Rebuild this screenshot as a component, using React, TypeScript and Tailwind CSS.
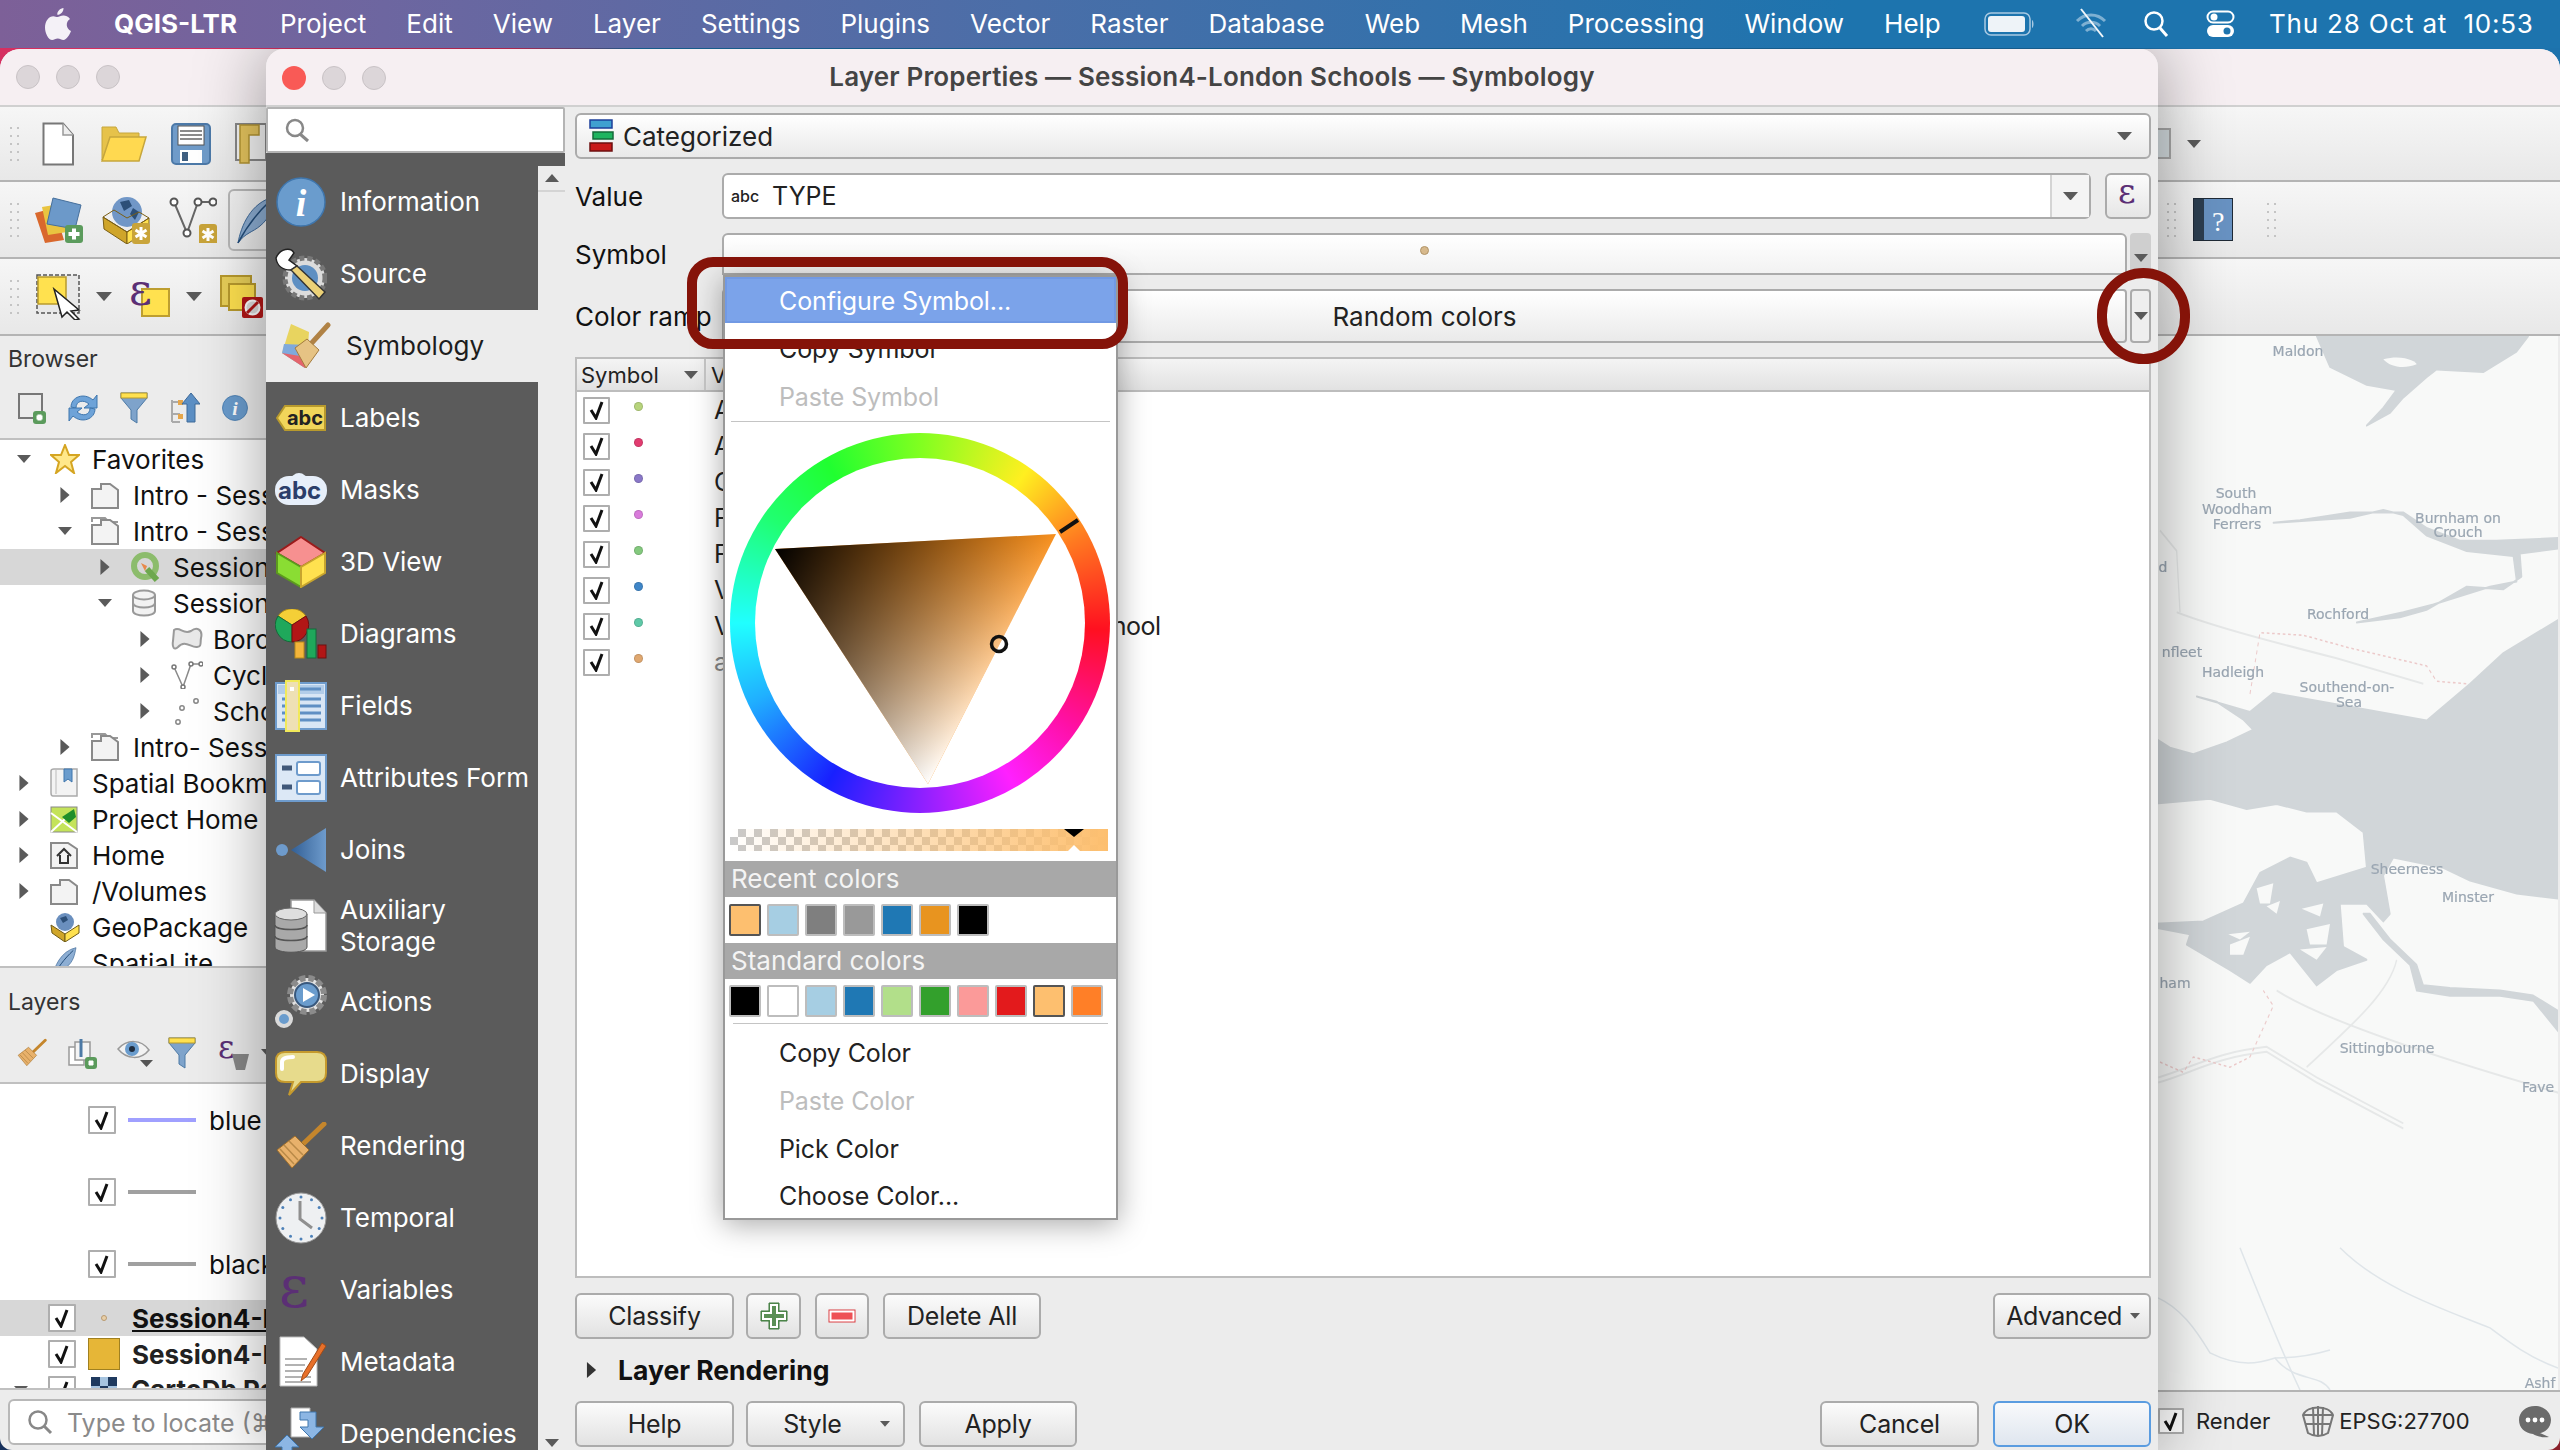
import React from "react";

const Arrow = ({ dir = "down", size = 14, color = "#5a5a5a" }: { dir?: "down" | "right" | "up"; size?: number; color?: string }) => {
  const d = dir === "down" ? "M0 0H14L7 8Z" : dir === "up" ? "M0 8H14L7 0Z" : "M2 -3L10 4L2 11Z";
  return (
    <svg width={size} height={dir === "right" ? 16 : (size * 8) / 14} viewBox={dir === "right" ? "0 -3 12 14" : "0 0 14 8"} className="shrink-0">
      <path d={d} fill={color} />
    </svg>
  );
};

const Grip = () => (
  <svg width="10" height="36" viewBox="0 0 10 36" className="shrink-0">
    {[1, 9, 17, 25, 33].map((y) => (
      <g key={y} fill="#c4c4c4">
        <rect x="0" y={y} width="2" height="2" />
        <rect x="7" y={y} width="2" height="2" />
      </g>
    ))}
  </svg>
);

const Check = ({ size = 28 }: { size?: number }) => (
  <span className="flex shrink-0 items-center justify-center rounded-[1px] border-2 border-[#aeaeae] bg-white" style={{ width: size, height: size }}>
    <svg width="18" height="20" viewBox="0 0 18 20">
      <path d="M3 10L8 18L14 2" fill="none" stroke="#111" strokeWidth="3" />
    </svg>
  </span>
);

const Eps = ({ size = 40, x = 0, y = 0 }: { size?: number; x?: number; y?: number }) => (
  <text x={x} y={y} fontSize={size} fontFamily="'DejaVu Serif', serif" fill="#5b2f75">
    ε
  </text>
);

const PlusBadge = ({ x, y, s = 18 }: { x: number; y: number; s?: number }) => (
  <g transform={`translate(${x} ${y})`}>
    <rect width={s} height={s} rx="3" fill="#5b9b5c" />
    <path d={`M${s / 2} 3.5V${s - 3.5}M3.5 ${s / 2}H${s - 3.5}`} stroke="#fff" strokeWidth="4" />
  </g>
);

const StarBadge = ({ x, y }: { x: number; y: number }) => (
  <g transform={`translate(${x} ${y})`}>
    <rect width="18" height="21" rx="3" fill="#c9a43a" />
    <path d="M9 4V17M3.5 7L14.5 14M14.5 7L3.5 14" stroke="#fff" strokeWidth="3" />
  </g>
);

const Svg = ({ w, h, children }: { w: number; h: number; children: React.ReactNode }) => (
  <svg width={w} height={h} viewBox={`0 0 ${w} ${h}`} className="shrink-0">
    {children}
  </svg>
);

// toolbar icons
const NewDoc = () => (
  <Svg w={32} h={44}>
    <path d="M1.5 1.5H21L31 13V42.5H1.5Z" fill="#fff" stroke="#777" strokeWidth="2" />
    <path d="M21 1.5V13H31" fill="#eee" stroke="#999" strokeWidth="1.5" />
  </Svg>
);
const OpenFolder = () => (
  <Svg w={46} h={36}>
    <path d="M1 34V1H15L18 7H38V13H10Z" fill="#e6c24a" stroke="#c6a63d" />
    <path d="M1 35L9 11H45L38 35Z" fill="#ffd950" stroke="#c6a63d" strokeWidth="1.5" />
  </Svg>
);
const SaveIcon = () => (
  <Svg w={40} h={42}>
    <rect x="1" y="1" width="38" height="40" rx="4" fill="#6f9bc9" stroke="#4c79a8" strokeWidth="2" />
    <rect x="7" y="3" width="26" height="19" fill="#fff" stroke="#555" />
    <path d="M9 8H31M9 12H31M9 16H31" stroke="#666" strokeWidth="1.5" />
    <rect x="9" y="27" width="22" height="13" fill="#fff" />
    <rect x="11" y="29" width="6" height="9" fill="#3f5f80" />
  </Svg>
);
const LayoutIcon = () => (
  <Svg w={34} h={42}>
    <rect x="1" y="1" width="30" height="36" fill="#f5f5f5" stroke="#888" strokeWidth="2" />
    <path d="M5 2H24V12H14V40H5Z" fill="#e6c55e" stroke="#b39433" strokeWidth="1.5" />
  </Svg>
);
const LayersIcon = () => (
  <Svg w={50} h={46}>
    <path d="M1 16L20 11L30 43L11 46Z" fill="#d9682d" />
    <path d="M8 10L26 7L33 35L14 38Z" fill="#e9c440" />
    <path d="M19 1L47 8L41 32L13 27Z" fill="#6c99c9" stroke="#456f9c" />
    <PlusBadge x={31} y={28} />
  </Svg>
);
const GlobeCube = () => (
  <Svg w={48} h={48}>
    <circle cx="25" cy="16" r="15" fill="#7197c7" />
    <path d="M18 6L27 4L30 10L22 15ZM31 12L37 16L33 24L28 18Z" fill="#2c4f78" />
    <path d="M1 21L25 36V48L2 33Z" fill="#cfa52a" stroke="#7a5f16" />
    <path d="M25 36L47 22V34L25 48Z" fill="#ffe14f" stroke="#7a5f16" />
    <path d="M1 21L12 14L25 22L37 16L47 22L25 36Z" fill="none" stroke="#7a5f16" />
    <StarBadge x={30} y={27} />
  </Svg>
);
const DigitizeV = () => (
  <Svg w={48} h={46}>
    <path d="M5 5L18 36L29 5H45" fill="none" stroke="#666" strokeWidth="2" />
    <g fill="#fff" stroke="#555" strokeWidth="2">
      <circle cx="5" cy="5" r="3.5" />
      <circle cx="18" cy="36" r="3.5" />
      <circle cx="29" cy="5" r="3.5" />
      <circle cx="44" cy="5" r="3.5" />
    </g>
    <StarBadge x={30} y={27} />
  </Svg>
);
const Feather = ({ w = 40, h = 48 }: { w?: number; h?: number }) => (
  <svg width={w} height={h} viewBox="0 0 40 48" className="shrink-0">
    <path d="M2 47C5 30 15 6 38 1C36 12 34 22 24 30C17 36 9 37 2 47Z" fill="#8daed3" stroke="#3f6a99" />
    <path d="M2 47C10 32 20 18 34 5" fill="none" stroke="#234d7a" strokeWidth="1.5" />
  </svg>
);
const SelectIcon = () => (
  <Svg w={46} h={46}>
    <rect x="1" y="1" width="42" height="38" fill="#e8e8e8" stroke="#555" strokeWidth="1.5" strokeDasharray="4 2" />
    <rect x="2" y="3" width="28" height="27" fill="#ffe14f" stroke="#b89a2d" strokeWidth="1.5" />
    <path d="M18 15L43 36L35 37L43 45L39 46L31 38L26 43Z" fill="#fff" stroke="#222" strokeWidth="1.5" />
  </Svg>
);
const EpsYellow = () => (
  <Svg w={40} h={42}>
    <rect x="12" y="13" width="27" height="27" fill="#ffe14f" stroke="#bd9e30" strokeWidth="2" />
    <Eps size={44} x={-1} y={29} />
  </Svg>
);
const Deselect = () => (
  <Svg w={46} h={44}>
    <rect x="1" y="1" width="30" height="30" fill="#e8cf59" stroke="#b89a2d" strokeWidth="2" />
    <rect x="9" y="9" width="26" height="26" fill="#ffe14f" stroke="#b89a2d" strokeWidth="2" />
    <rect x="22" y="22" width="21" height="21" rx="2" fill="#b21616" />
    <circle cx="32.5" cy="32.5" r="7" fill="#ddd" stroke="#fff" strokeWidth="2" />
    <path d="M27 38L38 27" stroke="#b21616" strokeWidth="3" />
  </Svg>
);
const HelpBook = () => (
  <Svg w={40} h={43}>
    <rect x="0.5" y="0.5" width="39" height="42" fill="#6892c2" stroke="#1f2a36" />
    <rect x="1" y="1" width="10" height="41" fill="#2c3e50" />
    <text x="19" y="33" fontSize="28" fill="#fff" fontFamily="'Liberation Serif', serif">?</text>
  </Svg>
);

// browser tool icons
const AddSmall = () => (
  <Svg w={28} h={32}>
    <rect x="1" y="2" width="23" height="24" fill="none" stroke="#777" strokeWidth="2" />
    <PlusBadge x={15} y={19} s={13} />
  </Svg>
);
const RefreshIcon = () => (
  <Svg w={30} h={32}>
    <path d="M3 15C3 5 16 0 25 8L29 3V16H16L21 12C15 7 8 9 8 16Z" fill="#6ea3d8" stroke="#3f76ad" />
    <path d="M27 17C27 27 14 32 5 24L1 29V16H14L9 20C15 25 22 23 22 16Z" fill="#6ea3d8" stroke="#3f76ad" />
  </Svg>
);
const FilterIcon = ({ w = 28, h = 32 }: { w?: number; h?: number }) => (
  <svg width={w} height={h} viewBox="0 0 28 32" className="shrink-0">
    <path d="M1 1H27V6L17 18V31L11 27V18L1 6Z" fill="#7ea3cb" stroke="#4d7aa6" />
    <rect x="1" y="1" width="26" height="5" fill="#ffe14f" stroke="#b89a2d" />
  </svg>
);
const CollapseIcon = () => (
  <Svg w={30} h={32}>
    <path d="M2 8V30M2 10H10M2 22H10M2 30H10" stroke="#aaa" strokeWidth="2" fill="none" />
    <rect x="8" y="8" width="5" height="5" fill="#e6a64a" />
    <rect x="8" y="22" width="5" height="5" fill="#e6a64a" />
    <path d="M21 1L30 12H25V30H17V12H12Z" fill="#5c8fc4" stroke="#3f6a99" />
  </Svg>
);
const InfoIcon = ({ size = 26 }: { size?: number }) => (
  <svg width={size} height={size} viewBox="0 0 50 50" className="shrink-0">
    <circle cx="25" cy="25" r="24" fill="#6a9ccd" stroke="#3f76ad" strokeWidth="1.5" />
    <text x="25" y="39" textAnchor="middle" fontSize="38" fontStyle="italic" fontWeight="700" fill="#fff" fontFamily="'Liberation Serif', serif">i</text>
  </svg>
);

// dialog list icons
const SourceIcon = () => (
  <Svg w={52} h={56}>
    <circle cx="30" cy="32" r="20" fill="#dcdcdc" stroke="#777" strokeWidth="5" strokeDasharray="5 3" />
    <circle cx="30" cy="32" r="13" fill="#5e8fc2" />
    <path d="M1 12C5 2 16 1 19 7L14 14L22 20L16 24C8 24 2 20 1 12Z" fill="#fff" stroke="#222" strokeWidth="1.5" />
    <path d="M22 20L50 46L44 53L16 24Z" fill="#ecd177" stroke="#333" strokeWidth="1.5" />
  </Svg>
);
const BrushPaper = () => (
  <Svg w={52} h={48}>
    <path d="M1 31L10 2L28 10L26 37L24 46Z" fill="#e8d45f" />
    <path d="M3 22L26 23L26 37L24 46L1 31Z" fill="#7fa9dc" />
    <path d="M1 31L25 35L24 46Z" fill="#e4646c" />
    <path d="M28 24L47 3" stroke="#b08245" strokeWidth="5" strokeLinecap="round" />
    <path d="M14 26L26 17L38 28L25 46Z" fill="#e6c384" stroke="#a47b3d" />
  </Svg>
);
const LabelsIcon = () => (
  <Svg w={50} h={26}>
    <path d="M1 13L9 1H49V25H9Z" fill="#f1d55a" stroke="#b89a2d" strokeWidth="2" />
    <text x="11" y="20" fontSize="20" fontWeight="700" fill="#222" fontFamily="Inter, sans-serif">abc</text>
  </Svg>
);
const MasksIcon = () => (
  <Svg w={54} h={36}>
    <rect x="1" y="4" width="52" height="29" rx="14" fill="#e7effa" />
    <circle cx="25" cy="9" r="8" fill="#e7effa" />
    <text x="4" y="27" fontSize="24" fontWeight="700" fill="#2c3e6a" fontFamily="Inter, sans-serif">abc</text>
  </Svg>
);
const CubeIcon = () => (
  <Svg w={52} h={52}>
    <path d="M26 1L50 17L26 31L2 17Z" fill="#f79090" stroke="#9b1b1b" strokeWidth="2" />
    <path d="M2 17L26 31V51L2 37Z" fill="#8add33" stroke="#5c9a1e" strokeWidth="2" />
    <path d="M50 17L26 31V51L50 37Z" fill="#ffe14f" stroke="#c7a42e" strokeWidth="2" />
  </Svg>
);
const DiagramsIcon = () => (
  <Svg w={52} h={50}>
    <path d="M17 16L3 7A17 17 0 0 1 31 7Z" fill="#f4cf37" stroke="#a8851b" />
    <path d="M17 16L3 7A17 17 0 0 0 17 33Z" fill="#1fa85b" stroke="#136b3a" />
    <path d="M17 16L31 7A17 17 0 0 1 17 33Z" fill="#b21616" stroke="#6e1010" />
    <rect x="20" y="33" width="9" height="16" fill="#f4b53a" stroke="#b88a1b" />
    <rect x="32" y="20" width="9" height="29" fill="#1fa85b" stroke="#136b3a" />
    <rect x="43" y="36" width="8" height="13" fill="#b21616" stroke="#6e1010" />
  </Svg>
);
const FieldsIcon = () => (
  <Svg w={52} h={52}>
    <rect x="1" y="3" width="50" height="46" fill="#d9e6f5" stroke="#6e9bcc" strokeWidth="2" />
    <rect x="3" y="5" width="46" height="9" fill="#b3cde9" />
    <path d="M22 9H46M22 19H46M22 26H46M22 33H46M22 40H46M7 19H11M7 26H11M7 33H11M7 40H11" stroke="#5f8fc4" strokeWidth="3" />
    <rect x="11" y="1" width="13" height="50" fill="#eee0b5" stroke="#f1e95a" strokeWidth="2" />
    <rect x="15" y="7" width="4" height="4" fill="#fff" />
  </Svg>
);
const FormIcon = () => (
  <Svg w={52} h={48}>
    <rect x="1" y="1" width="50" height="46" fill="#dce8f6" stroke="#6e9bcc" strokeWidth="2" />
    <path d="M7 14H17M7 33H17" stroke="#40587a" strokeWidth="5" />
    <rect x="22" y="8" width="23" height="13" rx="2" fill="#fff" stroke="#6e9bcc" strokeWidth="2" />
    <rect x="22" y="27" width="23" height="13" rx="2" fill="#fff" stroke="#6e9bcc" strokeWidth="2" />
  </Svg>
);
const JoinsIcon = () => (
  <Svg w={52} h={46}>
    <defs>
      <linearGradient id="jg" x1="0" x2="1">
        <stop offset="0" stopColor="#325f95" />
        <stop offset="1" stopColor="#6e9bcc" />
      </linearGradient>
    </defs>
    <circle cx="7" cy="23" r="6" fill="#6e9bcc" />
    <path d="M16 23L51 1V45Z" fill="url(#jg)" />
  </Svg>
);
const AuxIcon = () => (
  <Svg w={54} h={54}>
    <path d="M17 1H40L52 14V52H17Z" fill="#fff" stroke="#999" strokeWidth="1.5" />
    <path d="M40 1V14H52" fill="#ddd" stroke="#999" />
    <path d="M1 15V48C1 55 33 55 33 48V15Z" fill="#a9a9a9" stroke="#555" />
    <ellipse cx="17" cy="15" rx="16" ry="6" fill="#dfdfdf" stroke="#666" />
    <path d="M1 26C1 32 33 32 33 26M1 37C1 43 33 43 33 37" fill="none" stroke="#555" strokeWidth="1.5" />
  </Svg>
);
const ActionsIcon = () => (
  <Svg w={54} h={56}>
    <circle cx="33" cy="21" r="17" fill="#e2e2e2" stroke="#8b8b8b" strokeWidth="6" strokeDasharray="6 3" />
    <circle cx="33" cy="21" r="12" fill="#6a9ccd" stroke="#39587c" strokeWidth="2" />
    <path d="M29 14L41 21L29 28Z" fill="#fff" />
    <circle cx="10" cy="45" r="7" fill="#6a9ccd" stroke="#dadada" strokeWidth="4" />
  </Svg>
);
const DisplayIcon = () => (
  <Svg w={52} h={46}>
    <path d="M10 1H42C48 1 51 4 51 10V22C51 28 48 31 42 31H26L14 44L18 31H10C4 31 1 28 1 22V10C1 4 4 1 10 1Z" fill="#e7db8c" stroke="#c59a2d" strokeWidth="2" />
    <path d="M7 18V11C7 8 9 6 18 6" fill="none" stroke="#fff" strokeWidth="4" strokeLinecap="round" />
  </Svg>
);
const BrushIcon = ({ w = 52, h = 48 }: { w?: number; h?: number }) => (
  <svg width={w} height={h} viewBox="0 0 52 48" className="shrink-0">
    <path d="M26 24L49 2" stroke="#c5862c" strokeWidth="5" strokeLinecap="round" />
    <path d="M2 28L20 14L34 28L17 46Z" fill="#e8b16b" stroke="#a06f2a" />
    <path d="M9 23L23 38M14 19L28 33M5 27L19 42" stroke="#b98a48" strokeWidth="1.5" />
  </svg>
);
const ClockIcon = () => (
  <Svg w={52} h={52}>
    <circle cx="26" cy="26" r="25" fill="#eef0f2" stroke="#9a9a9a" />
    {[0, 30, 60, 90, 120, 150, 180, 210, 240, 270, 300, 330].map((a) => (
      <circle key={a} cx={26 + 21 * Math.sin((a * Math.PI) / 180)} cy={26 - 21 * Math.cos((a * Math.PI) / 180)} r="1.5" fill="#4e81b8" />
    ))}
    <path d="M25 9V27L37 36" fill="none" stroke="#8f8f8f" strokeWidth="3" />
  </Svg>
);
const VarIcon = () => (
  <Svg w={52} h={50}>
    <Eps size={58} x={4} y={42} />
  </Svg>
);
const MetaIcon = () => (
  <Svg w={52} h={52}>
    <path d="M5 1H29L42 13V50H5Z" fill="#fff" stroke="#bbb" />
    <path d="M10 23H32M10 29H30M10 35H28M10 41H36M10 46H36" stroke="#999" strokeWidth="1.5" />
    <path d="M47 7L28 38L26 45L32 40L51 10Z" fill="#e8702a" stroke="#a34b17" />
  </Svg>
);
const DepsIcon = () => (
  <Svg w={54} h={54}>
    <path d="M17 1H36V30H17Z" fill="#fff" stroke="#aaa" />
    <path d="M26 5H42V20H50L38 32L26 20H34V13H26Z" fill="#8cb6e4" stroke="#3f76ad" />
    <path d="M1 40L13 28L25 40H18V54H8V40Z" fill="#8cb6e4" stroke="#3f76ad" />
  </Svg>
);

// tree icons
const FolderGrey = ({ tab = false }: { tab?: boolean }) => (
  <Svg w={28} h={28}>
    {tab && <path d="M1 5V1H14L18 5H27" fill="none" stroke="#999" strokeWidth="2" />}
    <path d="M1 27V8H10V3L19 3L27 9V27Z" fill="#f3f3f3" stroke="#8a8a8a" strokeWidth="2" />
  </Svg>
);
const QgisQ = () => (
  <Svg w={30} h={30}>
    <circle cx="14" cy="14" r="11" fill="none" stroke="#8cbc6c" strokeWidth="6" />
    <path d="M16 17L26 28" stroke="#6da84e" strokeWidth="6" />
    <path d="M10 11L16 14L14 19Z" fill="#e8894a" />
  </Svg>
);
const DbIcon = () => (
  <Svg w={26} h={28}>
    <path d="M2 6V22C2 28 24 28 24 22V6" fill="#f2f2f2" stroke="#999" strokeWidth="2" />
    <ellipse cx="13" cy="6" rx="11" ry="4.5" fill="#f2f2f2" stroke="#999" strokeWidth="2" />
    <path d="M2 14C2 20 24 20 24 14" fill="none" stroke="#999" strokeWidth="2" />
  </Svg>
);
const PolyIcon = () => (
  <Svg w={32} h={24}>
    <path d="M3 3C9 -1 12 8 20 4C26 -1 32 3 30 11C29 17 31 19 26 20C20 21 14 12 7 20C3 24 1 20 2 14Z" fill="#e9e9e9" stroke="#9a9a9a" strokeWidth="2" />
  </Svg>
);
const LineIcon = () => (
  <Svg w={32} h={28}>
    <path d="M3 6L12 26L20 3H30" fill="none" stroke="#8a8a8a" strokeWidth="1.5" />
    <g fill="#fff" stroke="#777" strokeWidth="1.5">
      <circle cx="3" cy="6" r="2" />
      <circle cx="12" cy="26" r="2" />
      <circle cx="20" cy="3" r="2" />
      <circle cx="30" cy="3" r="2" />
    </g>
  </Svg>
);
const PointsIcon = () => (
  <Svg w={32} h={28}>
    <g fill="#fff" stroke="#888" strokeWidth="1.5">
      <circle cx="25" cy="4" r="2.2" />
      <circle cx="11" cy="11" r="2.2" />
      <circle cx="7" cy="25" r="2.2" />
    </g>
  </Svg>
);
const BookmarkIcon = () => (
  <Svg w={28} h={30}>
    <path d="M1 3C1 1 3 1 4 1H27V28H3C1 28 1 26 1 25Z" fill="#f3f3f3" stroke="#aaa" strokeWidth="1.5" />
    <path d="M6 2V26" stroke="#bbb" />
    <path d="M14 1H22V14L18 11L14 14Z" fill="#6a9ccd" stroke="#3f76ad" />
  </Svg>
);
const ProjectHomeIcon = () => (
  <Svg w={28} h={28}>
    <rect x="1" y="2" width="26" height="25" fill="#c4e35a" stroke="#888" />
    <path d="M1 8L27 27M1 27L15 14" stroke="#fff" strokeWidth="2" />
    <path d="M12 12L24 4L26 12L19 18Z" fill="#1f8f2a" />
  </Svg>
);
const HomeIcon = () => (
  <Svg w={28} h={28}>
    <path d="M1 27V2H18L27 8V27Z" fill="#f3f3f3" stroke="#8a8a8a" strokeWidth="2" />
    <path d="M7 15L14 8L21 15M10 14V22H18V14" fill="none" stroke="#333" strokeWidth="2" />
  </Svg>
);
const GeoPkgSmall = () => (
  <Svg w={30} h={30}>
    <circle cx="15" cy="10" r="9" fill="#6a8fbe" />
    <path d="M10 6L16 4L18 8L13 11Z" fill="#2c4f78" />
    <path d="M1 13L15 22V30L2 21Z" fill="#d0a62a" stroke="#6e5a17" />
    <path d="M15 22L29 13V21L15 30Z" fill="#ffe14f" stroke="#6e5a17" />
  </Svg>
);
const StarIcon = () => (
  <Svg w={30} h={30}>
    <path d="M15 1L19 11H29L21 18L24 29L15 22L6 29L9 18L1 11H11Z" fill="#ffe88a" stroke="#d5a522" strokeWidth="2" />
  </Svg>
);

const PaneItem = ({ icon, label, active, h = "h-[72px]" }: { icon: React.ReactNode; label: React.ReactNode; active?: boolean; h?: string }) => (
  <div className={"flex shrink-0 items-center " + h + (active ? " bg-[#ececec] pl-[14px] text-[#1d1d1d]" : " pl-[8px] text-white")}>
    <span className={"flex w-[54px] shrink-0 items-center justify-center"}>{icon}</span>
    <span className="ml-[12px] leading-[32px]">{label}</span>
  </div>
);

const panes = [
  { icon: <InfoIcon size={50} />, label: "Information" },
  { icon: <SourceIcon />, label: "Source" },
  { icon: <BrushPaper />, label: "Symbology", active: true },
  { icon: <LabelsIcon />, label: "Labels" },
  { icon: <MasksIcon />, label: "Masks" },
  { icon: <CubeIcon />, label: "3D View" },
  { icon: <DiagramsIcon />, label: "Diagrams" },
  { icon: <FieldsIcon />, label: "Fields" },
  { icon: <FormIcon />, label: "Attributes Form" },
  { icon: <JoinsIcon />, label: "Joins" },
  { icon: <AuxIcon />, label: <>Auxiliary<br />Storage</>, h: "h-[80px]" },
  { icon: <ActionsIcon />, label: "Actions" },
  { icon: <DisplayIcon />, label: "Display" },
  { icon: <BrushIcon />, label: "Rendering" },
  { icon: <ClockIcon />, label: "Temporal" },
  { icon: <VarIcon />, label: "Variables" },
  { icon: <MetaIcon />, label: "Metadata" },
  { icon: <DepsIcon />, label: "Dependencies" },
];

const indentClass = ["pl-[17px]", "pl-[58px]", "pl-[98px]", "pl-[138px]"];

const TreeRow = ({ level, arrow, icon, label, active }: { level: number; arrow?: "down" | "right"; icon: React.ReactNode; label: string; active?: boolean }) => (
  <div className={"flex h-[36px] shrink-0 items-center whitespace-nowrap text-[#111] " + indentClass[level] + (active ? " bg-[#d7d7d7]" : "")}>
    <span className="flex w-[33px] shrink-0 items-center">{arrow && <Arrow dir={arrow} />}</span>
    <span className="flex w-[42px] shrink-0 items-center">{icon}</span>
    <span className="pt-[2px]">{label}</span>
  </div>
);

const browserRows = [
  { level: 1, arrow: "right", icon: <FolderGrey />, label: "Intro - Session 1" },
  { level: 1, arrow: "down", icon: <FolderGrey tab />, label: "Intro - Session 4" },
  { level: 2, arrow: "right", icon: <QgisQ />, label: "Session4.qgz", active: true },
  { level: 2, arrow: "down", icon: <DbIcon />, label: "Session4.gpkg" },
  { level: 3, arrow: "right", icon: <PolyIcon />, label: "Boroughs" },
  { level: 3, arrow: "right", icon: <LineIcon />, label: "Cycle" },
  { level: 3, arrow: "right", icon: <PointsIcon />, label: "Schools" },
  { level: 1, arrow: "right", icon: <FolderGrey tab />, label: "Intro- Session 5" },
  { level: 0, arrow: "right", icon: <BookmarkIcon />, label: "Spatial Bookmarks" },
  { level: 0, arrow: "right", icon: <ProjectHomeIcon />, label: "Project Home" },
  { level: 0, arrow: "right", icon: <HomeIcon />, label: "Home" },
  { level: 0, arrow: "right", icon: <FolderGrey />, label: "/Volumes" },
  { level: 0, icon: <GeoPkgSmall />, label: "GeoPackage" },
  { level: 0, icon: <Feather w={28} h={32} />, label: "SpatiaLite" },
] as const;

const legendRows = [
  { color: "#a0a0ff", label: "blue", h: "h-[72px]" },
  { color: "#a0a0a0", label: "", h: "h-[72px]" },
  { color: "#a0a0a0", label: "black", h: "h-[54px]" },
];

const symbolRows = [
  { color: "#b7d47c", label: "Academy Converter" },
  { color: "#e23c70", label: "Academy Sponsor Led" },
  { color: "#8a78c8", label: "Community School" },
  { color: "#d97bdb", label: "Foundation School" },
  { color: "#84c97e", label: "Free School" },
  { color: "#3f86c8", label: "Voluntary Aided School" },
  { color: "#5fc9a8", label: "Voluntary Controlled Secondary School" },
  { color: "#e0a870", label: "all other values", muted: true },
];

const recent = ["#fdbf6f", "#a6cee3", "#7f7f7f", "#999999", "#1f78b4", "#e8941f", "#000000"];
const standard = ["#000000", "#ffffff", "#a6cee3", "#1f78b4", "#b2df8a", "#33a02c", "#fb9a99", "#e31a1c", "#fdbf6f", "#ff7f27"];

const Swatch = ({ color, selected }: { color: string; selected?: boolean }) => (
  <span
    className={"h-[32px] w-[32px] shrink-0 rounded-[2px] border-2 " + (selected ? "border-[#555555]" : "border-[#bdbdbd]")}
    style={{ backgroundColor: color }}
  />
);

const Btn = ({ children, className = "", blue }: { children: React.ReactNode; className?: string; blue?: boolean }) => (
  <div
    className={
      "flex h-[46px] shrink-0 items-center justify-center rounded-[6px] border-2 bg-linear-to-b text-[25px] tracking-[-0.2px] text-[#222] " +
      (blue ? "border-[#5a9ce0] from-[#f8f9fb] to-[#dfe6ef] " : "border-[#ababab] from-[#fbfbfb] to-[#e2e2e2] ") +
      className
    }
  >
    {children}
  </div>
);

const MapView = () => (
  <svg viewBox="420 340 2138 1052" preserveAspectRatio="none" className="h-full w-full blur-[0.7px]">
    <rect x="420" y="340" width="2138" height="1052" fill="#f8f9f8" />
    <g transform="translate(2150 330) scale(0.3333 0.5102)" fill="#d1d6d9" stroke="#d1d6d9" strokeWidth="4" strokeLinejoin="round">
      <path d="M500 20H1135L1100 50L1000 90L860 85L830 100L760 140L720 170L650 195L700 160L740 125L650 115L540 80Z" />
      <path d="M370 385L600 375L700 360L760 370L830 410L950 440L1090 450L1100 500L1020 510L850 545L760 560L620 580L750 570L830 555L950 510L1060 515L1115 490L1110 445L1225 435V415L1040 420L930 420L830 395L760 365L600 365L450 380Z" />
      <path d="M0 800L60 825L130 838L230 815L310 790L280 770L200 735L140 725L300 755L370 718L600 745L830 772L960 700L1060 640L1225 575V1120L1100 1110L960 1085L880 1060L730 1040L700 1075L650 1060L640 990L560 950L470 950L380 935L290 945L180 925L0 935Z" />
      <path d="M0 1175L120 1190L110 1210L240 1260L300 1285L350 1250L420 1225L500 1290L560 1260L650 1240L580 1215L570 1130L650 1130L700 1165L720 1150L700 1075L650 1060L500 1090L470 1050L420 1040L330 1070L280 1130L160 1165L0 1170Z" />
      <path d="M640 1150L700 1200L780 1250L800 1300L900 1310L1050 1310L1150 1320L1225 1380V1340L1150 1310L1050 1300L900 1295L820 1290L800 1250L720 1200L660 1150Z" />
    </g>
    <g transform="translate(2150 330) scale(0.3333 0.5102)" fill="#f8f9f8">
      <path d="M700 65C760 55 800 70 800 75C760 85 720 80 700 65Z" />
      <path d="M240 1210L300 1195L280 1230L240 1230Z" />
      <path d="M470 1180L540 1170L530 1210L480 1210Z" />
      <path d="M450 1220L530 1215L500 1240Z" />
      <path d="M320 1100L370 1090L360 1130L330 1130Z" />
      <path d="M350 1135L390 1125L380 1150Z" />
      <path d="M455 1140L520 1130L510 1155Z" />
      <path d="M235 1190L300 1185L270 1200Z" />
    </g>
    <g transform="translate(2150 330) scale(0.3333 0.5102)" fill="none" stroke="#e6e8e8" strokeWidth="4">
      <path d="M25 1470C130 1450 200 1420 350 1410L500 1470L760 1560" />
      <path d="M25 1480C130 1460 200 1430 350 1420L500 1480L760 1570" />
      <path d="M80 560C200 590 380 620 560 650L820 700" />
      <path d="M380 1300C500 1350 800 1420 1225 1500" />
      <path d="M740 1240C720 1300 620 1360 470 1450" />
      <path d="M30 400L80 440L90 560" />
    </g>
    <g transform="translate(2150 330) scale(0.3333 0.5102)" fill="none" stroke="#eccaca" strokeWidth="3" strokeDasharray="8 8">
      <path d="M300 720L330 600L460 605L600 630L830 665L860 695L950 700" />
      <path d="M30 1440L100 1460L130 1430L240 1450L300 1430L370 1330L340 1300" />
    </g>
    <g fill="none" stroke="#dfe5e9" strokeWidth="1.5">
      <path d="M2158 1300C2180 1310 2195 1330 2210 1355C2240 1370 2260 1365 2275 1360C2295 1385 2320 1375 2330 1392" />
      <path d="M2275 1360C2300 1360 2320 1355 2330 1352" />
      <path d="M2340 1250C2380 1290 2440 1310 2490 1330C2510 1345 2530 1360 2558 1370" />
      <path d="M2240 1250C2260 1300 2280 1350 2300 1392" />
    </g>
    <g fontFamily="'DejaVu Sans', sans-serif" fontSize="14" fill="#9aa6b2" stroke="#9aa6b2" strokeWidth="0.2" textAnchor="middle">
      <text x="2298" y="360">Maldon</text>
      <text x="2236" y="502">South</text>
      <text x="2237" y="518">Woodham</text>
      <text x="2237" y="533">Ferrers</text>
      <text x="2458" y="527">Burnham on</text>
      <text x="2458" y="541">Crouch</text>
      <text x="2338" y="622">Rochford</text>
      <text x="2182" y="660">nfleet</text>
      <text x="2233" y="680">Hadleigh</text>
      <text x="2347" y="695">Southend-on-</text>
      <text x="2349" y="710">Sea</text>
      <text x="2407" y="877">Sheerness</text>
      <text x="2468" y="905">Minster</text>
      <text x="2387" y="1056">Sittingbourne</text>
      <text x="2538" y="1095">Fave</text>
      <text x="2175" y="991">ham</text>
      <text x="2163" y="576">d</text>
      <text x="2540" y="1390">Ashf</text>
    </g>
  </svg>
);

const Wheel = () => (
  <div className="relative ml-[5px] mt-[11px] flex h-[380px] w-[380px] shrink-0 items-center justify-center rounded-full bg-[conic-gradient(#80ff20_0deg,#ffef20_35deg,#ff7a20_62deg,#ff1020_92deg,#ff10a8_125deg,#ff20ff_150deg,#1820ff_210deg,#20b0ff_245deg,#20ffff_270deg,#20ff70_305deg,#20ff30_330deg,#80ff20_360deg)]">
    <div className="h-[330px] w-[330px] rounded-full bg-white" />
    <svg viewBox="0 0 380 380" className="absolute inset-0 h-[380px] w-[380px]">
      <defs>
        <linearGradient id="tblack" gradientUnits="userSpaceOnUse" x1="45" y1="116" x2="262" y2="226">
          <stop offset="0" stopColor="#000" stopOpacity="1" />
          <stop offset="1" stopColor="#000" stopOpacity="0" />
        </linearGradient>
        <linearGradient id="twhite" gradientUnits="userSpaceOnUse" x1="198" y1="351" x2="186" y2="108">
          <stop offset="0" stopColor="#fff" stopOpacity="1" />
          <stop offset="1" stopColor="#fff" stopOpacity="0" />
        </linearGradient>
      </defs>
      <path d="M326 101L45 116L198 351Z" fill="#f68f1e" />
      <path d="M326 101L45 116L198 351Z" fill="url(#twhite)" />
      <path d="M326 101L45 116L198 351Z" fill="url(#tblack)" />
      <path d="M330 99L348 87" stroke="#111" strokeWidth="4" />
      <circle cx="269" cy="211" r="7.5" fill="none" stroke="#111" strokeWidth="3.5" />
    </svg>
  </div>
);

export default function App() {
  return (
    <div className="relative h-[1450px] w-[2560px] overflow-hidden bg-[linear-gradient(90deg,#d52f60_0%,#d52f60_20%,#1d72ac_25%,#1d72ac_100%)] font-['Inter',sans-serif] text-[26px] leading-none">
      <span className="absolute bottom-0 left-0 h-[20px] w-[20px] bg-[#16305c]" />
      <span className="absolute bottom-0 right-0 h-[20px] w-[20px] bg-[#8a1f2a]" />
      {/* macOS menu bar */}
      <div className="relative z-30 flex h-[48px] items-center bg-[linear-gradient(90deg,#7d6098_0%,#6d66a0_15%,#4a6ea8_40%,#1d74ae_72%,#1d74ae_100%)] text-white">
        <svg width="28" height="34" viewBox="0 0 28 34" className="ml-[44px] shrink-0">
          <path
            d="M19.5 1C19.7 4.6 16.6 8 13.3 7.8C13 4.4 16.2 1.2 19.5 1ZM13.5 10C15 10 17 8.4 19.8 8.6C21.4 8.7 24.2 9.3 26 12C21.2 15 22 21.8 27 24C25.6 27.5 22.6 33 19.4 33C17.4 33 16 31.6 13.8 31.6C11.4 31.6 10 33 8.2 33C4.6 33 1 26.4 1 20.4C1 14 5 9.2 9.4 9.2C11 9.2 12.2 10 13.5 10Z"
            fill="#f4f1f7"
          />
        </svg>
        <span className="ml-[42px] font-bold">QGIS-LTR</span>
        <div className="ml-[43px] flex gap-[40px]">
          {["Project", "Edit", "View", "Layer", "Settings", "Plugins", "Vector", "Raster", "Database", "Web", "Mesh", "Processing", "Window", "Help"].map((m) => (
            <span key={m}>{m}</span>
          ))}
        </div>
        <div className="ml-auto flex items-center pr-[39px]">
          <svg width="52" height="24" viewBox="0 0 52 24" className="shrink-0">
            <rect x="1" y="1" width="45" height="22" rx="6" fill="none" stroke="#a9c9e2" strokeWidth="1.5" />
            <rect x="4" y="4" width="37" height="16" rx="3" fill="#eef3f8" />
            <path d="M48 8C50 9 50 15 48 16Z" fill="#a9c9e2" />
          </svg>
          <svg width="32" height="32" viewBox="0 0 32 32" className="ml-[39px] shrink-0">
            <path d="M2 13C10 5 22 5 30 13M7 18C12 13 20 13 25 18M11 23C14 20 18 20 21 23" fill="none" stroke="#7eb0d2" strokeWidth="3" />
            <path d="M6 1L28 29" stroke="#f1f6fa" strokeWidth="2" />
          </svg>
          <svg width="26" height="28" viewBox="0 0 26 28" className="ml-[36px] shrink-0">
            <circle cx="11" cy="11" r="8.5" fill="none" stroke="#fff" strokeWidth="2.5" />
            <path d="M17 18L24 26" stroke="#fff" strokeWidth="3" />
          </svg>
          <svg width="30" height="28" viewBox="0 0 30 28" className="ml-[37px] shrink-0">
            <rect x="1.5" y="1.5" width="26" height="11" rx="5.5" fill="none" stroke="#fff" strokeWidth="2" />
            <circle cx="8" cy="7" r="3.5" fill="#fff" />
            <rect x="1" y="15" width="27" height="12" rx="6" fill="#fff" />
            <circle cx="21" cy="21" r="3.5" fill="#1d74ae" />
          </svg>
          <span className="ml-[33px] w-[252px] whitespace-pre tracking-[0.8px]">Thu 28 Oct at  10:53</span>
        </div>
      </div>

      {/* main QGIS window */}
      <div className="absolute left-0 top-[49px] flex h-[1401px] w-[2560px] flex-col overflow-hidden rounded-t-[20px] rounded-b-[12px] bg-[#ececec]">
        <div className="flex h-[58px] shrink-0 items-center gap-[16px] border-b-2 border-[#d0d0d0] bg-[#f6eff2] pl-[16px]">
          {[0, 1, 2].map((i) => (
            <span key={i} className="h-[24px] w-[24px] rounded-full border border-[#c8c2c5] bg-[#dcd6d9]" />
          ))}
        </div>
        {/* toolbars */}
        <div className="flex h-[75px] shrink-0 items-center border-b-2 border-[#b4b4b4] bg-linear-to-b from-[#f6f6f6] to-[#e8e8e8] pl-[10px]">
          <Grip />
          <span className="ml-[22px]"><NewDoc /></span>
          <span className="ml-[27px]"><OpenFolder /></span>
          <span className="ml-[24px]"><SaveIcon /></span>
          <span className="ml-[24px]"><LayoutIcon /></span>
          <span className="ml-[1861px] h-[31px] w-[41px] shrink-0 border-2 border-[#a8a8a8] bg-[#d5dde0]" />
          <span className="ml-[16px]"><Arrow /></span>
        </div>
        <div className="flex h-[77px] shrink-0 items-center border-b-2 border-[#b4b4b4] bg-linear-to-b from-[#f6f6f6] to-[#e8e8e8] pl-[10px]">
          <Grip />
          <span className="ml-[14px]"><LayersIcon /></span>
          <span className="ml-[18px]"><GlobeCube /></span>
          <span className="ml-[19px]"><DigitizeV /></span>
          <span className="ml-[11px] flex h-[62px] w-[80px] shrink-0 items-center rounded-[6px] border-2 border-[#b8b8b8] pl-[6px]"><Feather /></span>
          <span className="ml-[1859px]"><Grip /></span>
          <span className="ml-[16px]"><HelpBook /></span>
          <span className="ml-[34px]"><Grip /></span>
        </div>
        <div className="flex h-[77px] shrink-0 items-center border-b-2 border-[#b4b4b4] bg-linear-to-b from-[#f6f6f6] to-[#e8e8e8] pl-[10px]">
          <Grip />
          <span className="ml-[16px]"><SelectIcon /></span>
          <span className="ml-[14px]"><Arrow size={16} /></span>
          <span className="ml-[18px]"><EpsYellow /></span>
          <span className="ml-[16px]"><Arrow size={16} /></span>
          <span className="ml-[18px]"><Deselect /></span>
        </div>
        {/* body */}
        <div className="flex min-h-0 flex-1">
          <div className="flex w-[420px] shrink-0 flex-col">
            <div className="flex h-[46px] shrink-0 items-center pl-[8px] text-[23px] text-[#333]">Browser</div>
            <div className="flex h-[56px] shrink-0 items-center gap-[22px] pb-[4px] pl-[18px]">
              <AddSmall />
              <RefreshIcon />
              <FilterIcon />
              <CollapseIcon />
              <InfoIcon />
            </div>
            <div className="flex h-[530px] shrink-0 flex-col overflow-hidden border-y-2 border-[#c0c0c0] bg-white pt-[1px]">
              <TreeRow level={0} arrow="down" icon={<StarIcon />} label="Favorites" />
              {browserRows.map((r) => (
                <TreeRow key={r.label} level={r.level} arrow={"arrow" in r ? r.arrow : undefined} icon={r.icon} label={r.label} active={"active" in r && r.active} />
              ))}
            </div>
            <div className="flex h-[66px] shrink-0 items-center pl-[8px] pt-[2px] text-[23px] text-[#333]">Layers</div>
            <div className="flex h-[48px] shrink-0 items-center pb-[10px] pl-[17px]">
              <BrushIcon w={30} h={30} />
              <svg width="30" height="32" viewBox="0 0 30 32" className="ml-[21px] shrink-0">
                <path d="M1 10H16V28H1Z" fill="#fff" stroke="#999" strokeWidth="1.5" />
                <path d="M7 5H22V23H7Z" fill="#f4f4f4" stroke="#999" strokeWidth="1.5" />
                <path d="M13 2V20" stroke="#4d7aa6" strokeWidth="3" />
                <PlusBadge x={17} y={20} s={12} />
              </svg>
              <svg width="36" height="30" viewBox="0 0 36 30" className="ml-[19px] shrink-0">
                <path d="M1 11C10 1 24 1 32 12C24 22 10 22 1 11Z" fill="#f2f2f2" stroke="#999" strokeWidth="1.5" />
                <circle cx="15" cy="11" r="7" fill="#6a9ccd" />
                <circle cx="15" cy="11" r="3" fill="#1f2d3f" />
                <path d="M23 22H36L29.5 29Z" fill="#555" />
              </svg>
              <span className="ml-[15px]"><FilterIcon /></span>
              <svg width="32" height="34" viewBox="0 0 32 34" className="ml-[22px] shrink-0">
                <Eps size={32} x={0} y={22} />
                <path d="M14 18H31L27 34H18Z" fill="#888" />
              </svg>
              <span className="ml-[11px]"><Arrow size={14} /></span>
            </div>
            <div className="flex h-[308px] shrink-0 flex-col overflow-hidden border-y-2 border-[#c0c0c0] bg-white pt-[18px]">
              {legendRows.map((r, i) => (
                <div key={i} className={"flex shrink-0 items-start whitespace-nowrap pl-[88px] text-[#111] " + r.h}>
                  <div className="flex h-[36px] items-center">
                    <Check />
                    <span className="ml-[12px] h-[4px] w-[68px]" style={{ backgroundColor: r.color }} />
                    <span className="ml-[13px] pt-[2px]">{r.label}</span>
                  </div>
                </div>
              ))}
              <div className="flex h-[36px] shrink-0 items-center whitespace-nowrap bg-[#d7d7d7] pl-[48px] font-bold text-[#111]">
                <Check />
                <span className="flex w-[56px] shrink-0 justify-center">
                  <span className="h-[6px] w-[6px] rounded-full border border-[#b89a70] bg-[#e9cfa8]" />
                </span>
                <span className="pt-[2px] underline decoration-2 underline-offset-2">Session4-London Schools</span>
              </div>
              <div className="flex h-[36px] shrink-0 items-center whitespace-nowrap pl-[48px] font-bold text-[#222]">
                <Check />
                <span className="ml-[12px] h-[32px] w-[32px] shrink-0 border border-[#a08020] bg-[#e6b637]" />
                <span className="ml-[12px] pt-[2px]">Session4-London Boroughs</span>
              </div>
              <div className="flex h-[36px] shrink-0 items-center whitespace-nowrap pl-[14px] font-bold text-[#222]">
                <span className="w-[34px] shrink-0"><Arrow /></span>
                <Check />
                <svg width="26" height="26" viewBox="0 0 26 26" className="ml-[15px] shrink-0">
                  <rect width="26" height="26" fill="#a6c4e0" />
                  <path d="M0 0H9V9H0ZM17 0H26V9H17ZM9 9H17V18H9Z" fill="#1f3a5f" />
                </svg>
                <span className="ml-[14px]">CartoDb Positron</span>
              </div>
            </div>
            <div className="min-h-0 flex-1 pl-[8px] pt-[9px]">
              <div className="flex h-[46px] w-[500px] shrink-0 items-center rounded-[6px] border-2 border-[#b8b8b8] bg-white pl-[17px] text-[25px] text-[#8a8a8a]">
                <svg width="26" height="26" viewBox="0 0 26 26" className="shrink-0">
                  <circle cx="11" cy="11" r="8.5" fill="none" stroke="#888" strokeWidth="2.5" />
                  <path d="M17 17L24 24" stroke="#888" strokeWidth="3" />
                </svg>
                <span className="ml-[14px] whitespace-nowrap pt-[3px]">Type to locate (⌘K)</span>
              </div>
            </div>
          </div>
          <div className="flex min-w-0 flex-1 flex-col">
            <div className="min-h-0 flex-1 border-b-2 border-[#b4b4b4] pr-[2px]">
              <MapView />
            </div>
            <div className="flex h-[58px] shrink-0 items-center pl-[1738px] text-[#222]">
              <Check size={26} />
              <span className="ml-[12px] text-[22px]">Render</span>
              <svg width="32" height="32" viewBox="0 0 32 32" className="ml-[32px] shrink-0">
                <g fill="none" stroke="#777" strokeWidth="2">
                  <path d="M1 10C5 0 27 0 31 10L26 28C20 32 12 32 6 28Z" />
                  <path d="M1 10H31M4 19H28M11 2L12 30M21 2L20 30M16 1V31" />
                </g>
              </svg>
              <span className="ml-[5px] text-[22px]">EPSG:27700</span>
              <svg width="34" height="34" viewBox="0 0 34 34" className="ml-[48px] shrink-0">
                <path d="M17 2C26 2 33 8 33 16C33 24 26 29 22 29L31 33C24 34 18 32 15 30C7 29 1 24 1 16C1 8 8 2 17 2Z" fill="#6b6b6b" />
                <circle cx="10" cy="16" r="2.4" fill="#fff" />
                <circle cx="17" cy="16" r="2.4" fill="#fff" />
                <circle cx="24" cy="16" r="2.4" fill="#fff" />
              </svg>
            </div>
          </div>
        </div>
      </div>

      {/* Layer Properties dialog */}
      <div className="absolute left-[266px] top-[49px] z-10 flex h-[1401px] w-[1892px] flex-col overflow-hidden rounded-t-[18px] bg-[#ececec] shadow-[0_0_70px_rgba(0,0,0,0.38)]">
        <div className="relative flex h-[58px] shrink-0 items-center justify-center border-b-2 border-[#d0d0d0] bg-[#f6eff2]">
          <div className="absolute left-[16px] top-[17px] flex gap-[16px]">
            <span className="h-[24px] w-[24px] rounded-full bg-[#f95a56]" />
            <span className="h-[24px] w-[24px] rounded-full border border-[#c8c2c5] bg-[#dcd6d9]" />
            <span className="h-[24px] w-[24px] rounded-full border border-[#c8c2c5] bg-[#dcd6d9]" />
          </div>
          <span className="font-semibold tracking-[0.15px] text-[#444]">Layer Properties — Session4-London Schools — Symbology</span>
        </div>
        <div className="flex min-h-0 flex-1">
          <div className="flex w-[299px] shrink-0 flex-col">
            <div className="flex h-[46px] shrink-0 items-center rounded-[2px] border-2 border-[#b4b4b4] bg-white pl-[16px]">
              <svg width="26" height="26" viewBox="0 0 26 26">
                <circle cx="11" cy="11" r="8" fill="none" stroke="#888" strokeWidth="2.5" />
                <path d="M16 17L24 24" stroke="#888" strokeWidth="3" />
              </svg>
            </div>
            <div className="h-[13px] shrink-0 bg-[#5b5b5b]" />
            <div className="flex min-h-0 flex-1">
              <div className="flex w-[272px] shrink-0 flex-col overflow-hidden bg-[#5b5b5b]">
                {panes.map((p) => (
                  <PaneItem key={typeof p.label === "string" ? p.label : "Auxiliary"} icon={p.icon} label={p.label} active={p.active} h={p.h} />
                ))}
              </div>
              <div className="flex w-[27px] shrink-0 flex-col items-center justify-between bg-[#ececec] pb-[3px]">
                <div className="flex h-[26px] w-full items-center justify-center border-b-2 border-[#d4d4d4]"><Arrow dir="up" /></div>
                <Arrow />
              </div>
            </div>
          </div>
          <div className="flex min-w-0 flex-1 flex-col gap-[14px] pb-[3px] pl-[10px] pr-[7px] pt-[6px]">
            <div className="flex h-[46px] shrink-0 items-center rounded-[6px] border-2 border-[#ababab] bg-linear-to-b from-[#ffffff] to-[#e9e9e9] pl-[11px] pr-[17px] text-[#222]">
              <svg width="26" height="34" viewBox="0 0 26 34" className="shrink-0">
                <rect x="2" y="1" width="22" height="8" fill="#3fa0d0" stroke="#1d3f9a" strokeWidth="1.5" />
                <rect x="5" y="13" width="20" height="7" fill="#1fb45f" stroke="#156b3a" strokeWidth="1.5" />
                <rect x="2" y="24" width="22" height="8" fill="#c81a1a" stroke="#6e1010" strokeWidth="1.5" />
              </svg>
              <span className="ml-[9px] pt-[2px]">Categorized</span>
              <span className="ml-auto"><Arrow size={15} /></span>
            </div>
            <div className="flex h-[46px] shrink-0 items-center text-[#111]">
              <span className="w-[147px] shrink-0 pt-[2px]">Value</span>
              <div className="flex h-[46px] min-w-0 flex-1 items-center rounded-[6px] border-2 border-[#ababab] bg-white">
                <span className="ml-[7px] w-[41px] text-[16px] font-medium text-[#222]">abc</span>
                <span className="text-[25px] text-[#222]">TYPE</span>
                <span className="ml-auto flex h-full w-[39px] items-center justify-center border-l-2 border-[#d4d4d4] bg-[#f4f4f4]"><Arrow size={15} /></span>
              </div>
              <div className="ml-[14px] flex h-[46px] w-[46px] shrink-0 items-center justify-center rounded-[6px] border-2 border-[#ababab] bg-linear-to-b from-[#fbfbfb] to-[#e6e6e6]">
                <svg width="26" height="34" viewBox="0 0 26 34"><Eps size={34} x={3} y={24} /></svg>
              </div>
            </div>
            <div className="flex h-[42px] shrink-0 items-center text-[#111]">
              <span className="w-[147px] shrink-0 pt-[2px]">Symbol</span>
              <div className="flex h-[42px] min-w-0 flex-1 items-center justify-center rounded-t-[6px] border-2 border-[#ababab] bg-linear-to-b from-[#ffffff] to-[#f2f2f2] pb-[8px]">
                <span className="h-[9px] w-[9px] rounded-full border border-[#b09468] bg-[#d7b98c]" />
              </div>
              <div className="ml-[3px] flex h-[42px] w-[21px] shrink-0 items-center justify-center rounded-t-[4px] bg-[#cfcfcf] pt-[8px]"><Arrow size={14} /></div>
            </div>
            <div className="flex h-[54px] shrink-0 items-center text-[#111]">
              <span className="w-[147px] shrink-0 whitespace-nowrap pt-[2px]">Color ramp</span>
              <div className="flex h-[54px] min-w-0 flex-1 items-center justify-center rounded-[4px] border-2 border-[#ababab] bg-linear-to-b from-[#ffffff] to-[#eaeaea] pt-[2px] text-[#222]">Random colors</div>
              <div className="ml-[3px] flex h-[54px] w-[21px] shrink-0 items-center justify-center rounded-[4px] border-2 border-[#ababab] bg-[#eeeeee]"><Arrow size={14} /></div>
            </div>
            <div className="flex min-h-0 w-[1576px] flex-1 flex-col border-2 border-[#bdbdbd] bg-white">
              <div className="flex h-[33px] shrink-0 items-center border-b-2 border-[#bdbdbd] bg-linear-to-b from-[#f4f4f4] to-[#e2e2e2] text-[22px] text-[#222]">
                <span className="flex h-full w-[129px] shrink-0 items-center border-r-2 border-[#c8c8c8] pl-[4px]">
                  Symbol
                  <span className="ml-auto mr-[6px]"><Arrow size={14} /></span>
                </span>
                <span className="pl-[5px]">Value</span>
              </div>
              {symbolRows.map((r) => (
                <div key={r.label} className="flex h-[36px] shrink-0 items-center whitespace-nowrap pl-[6px] text-[25px] tracking-[-0.5px] text-[#222]">
                  <Check size={27} />
                  <span className="flex w-[104px] shrink-0 items-start pl-[24px]">
                    <span className="mb-[8px] h-[9px] w-[9px] rounded-full border border-[#00000022]" style={{ backgroundColor: r.color }} />
                  </span>
                  <span className={r.muted ? "text-[#888]" : ""}>{r.label}</span>
                </div>
              ))}
            </div>
            <div className="mt-[1px] flex h-[46px] shrink-0 items-center">
              <Btn className="w-[159px]">Classify</Btn>
              <Btn className="ml-[12px] w-[55px]">
                <svg width="28" height="28" viewBox="0 0 28 28">
                  <path d="M9 1H19V9H27V19H19V27H9V19H1V9H9Z" fill="#5a8f55" stroke="#3f7a3f" strokeWidth="1" />
                  <path d="M11 3H17V11H25V17H17V25H11V17H3V11H11Z" fill="#5a8f55" stroke="#fff" strokeWidth="2" />
                </svg>
              </Btn>
              <Btn className="ml-[14px] w-[54px]">
                <svg width="28" height="14" viewBox="0 0 28 14">
                  <rect x="1" y="1" width="26" height="12" fill="#ee5155" stroke="#d73c40" strokeWidth="1" />
                  <rect x="2.5" y="2.5" width="23" height="9" fill="#ee5155" stroke="#fff" strokeWidth="2" />
                </svg>
              </Btn>
              <Btn className="ml-[14px] w-[158px]">Delete All</Btn>
              <Btn className="ml-auto w-[158px] pl-[2px] tracking-[-0.5px]">
                Advanced
                <span className="ml-[8px]"><Arrow size={10} /></span>
              </Btn>
            </div>
            <div className="flex h-[34px] shrink-0 items-center pl-[9px] text-[26.5px] font-bold text-[#111]">
              <Arrow dir="right" size={15} color="#333" />
              <span className="ml-[19px]">Layer Rendering</span>
            </div>
            <div className="flex h-[46px] shrink-0 items-center">
              <Btn className="w-[159px]">Help</Btn>
              <Btn className="ml-[12px] w-[159px] pl-[22px]">
                Style
                <span className="ml-[38px]"><Arrow size={10} /></span>
              </Btn>
              <Btn className="ml-[14px] w-[158px]">Apply</Btn>
              <Btn className="ml-auto w-[159px]">Cancel</Btn>
              <Btn className="ml-[14px] w-[158px]" blue>OK</Btn>
            </div>
          </div>
        </div>
      </div>

      {/* symbol context menu */}
      <div className="absolute left-[723px] top-[275px] z-20 flex h-[945px] w-[395px] flex-col border-2 border-[#999999] bg-white text-[25px] tracking-[-0.1px] text-[#222] shadow-[0_4px_28px_rgba(0,0,0,0.35)]">
        <div className="mb-[2px] flex h-[46px] shrink-0 items-center border-2 border-[#7199e4] bg-[#7ba3ea] pl-[52px] pt-[2px] text-white">Configure Symbol...</div>
        <div className="flex h-[48px] shrink-0 items-center pl-[54px]">Copy Symbol</div>
        <div className="flex h-[48px] shrink-0 items-center pl-[54px] text-[#bdbdbd]">Paste Symbol</div>
        <div className="mx-[6px] h-px shrink-0 bg-[#c4c4c4]" />
        <Wheel />
        <div className="relative ml-[5px] mt-[16px] h-[22px] w-[378px] shrink-0 bg-[linear-gradient(90deg,rgba(253,191,111,0)_0%,#fdbf6f_100%),repeating-conic-gradient(#c9c9c9_0%_25%,#ffffff_0%_50%)] bg-[length:100%_100%,16px_16px]">
          <svg width="20" height="22" viewBox="0 0 20 22" className="absolute left-[334px] top-0">
            <path d="M0 0H20L10 8Z" fill="#000" />
            <path d="M4 22H16L10 16Z" fill="#fff" />
          </svg>
        </div>
        <div className="mt-[10px] flex h-[36px] shrink-0 items-center bg-[#a8a8a8] pl-[6px] text-[26px] tracking-normal text-[#f4f4f4]">Recent colors</div>
        <div className="flex h-[46px] shrink-0 gap-[6px] pl-[4px] pt-[7px]">
          {recent.map((c, i) => (
            <Swatch key={c} color={c} selected={i === 0} />
          ))}
        </div>
        <div className="flex h-[36px] shrink-0 items-center bg-[#a8a8a8] pl-[6px] text-[26px] tracking-normal text-[#f4f4f4]">Standard colors</div>
        <div className="flex h-[44px] shrink-0 gap-[6px] pl-[4px] pt-[6px]">
          {standard.map((c) => (
            <Swatch key={c} color={c} selected={c === "#fdbf6f"} />
          ))}
        </div>
        <div className="mx-[8px] h-px shrink-0 bg-[#c4c4c4]" />
        <div className="mt-[4px] flex h-[48px] shrink-0 items-center pl-[54px] pt-[2px]">Copy Color</div>
        <div className="flex h-[48px] shrink-0 items-center pl-[54px] pt-[2px]">
          <span className="text-[#bdbdbd]">Paste Color</span>
        </div>
        <div className="flex h-[48px] shrink-0 items-center pl-[54px] pt-[2px]">Pick Color</div>
        <div className="flex h-[46px] shrink-0 items-center pl-[54px] pt-[2px]">Choose Color...</div>
      </div>

      {/* red annotations */}
      <div className="absolute left-[687px] top-[257px] z-20 h-[92px] w-[441px] rounded-[26px] border-[10px] border-[#851309]" />
      <div className="absolute left-[2097px] top-[268px] z-20 h-[96px] w-[93px] rounded-full border-[10px] border-[#851309]" />
    </div>
  );
}
